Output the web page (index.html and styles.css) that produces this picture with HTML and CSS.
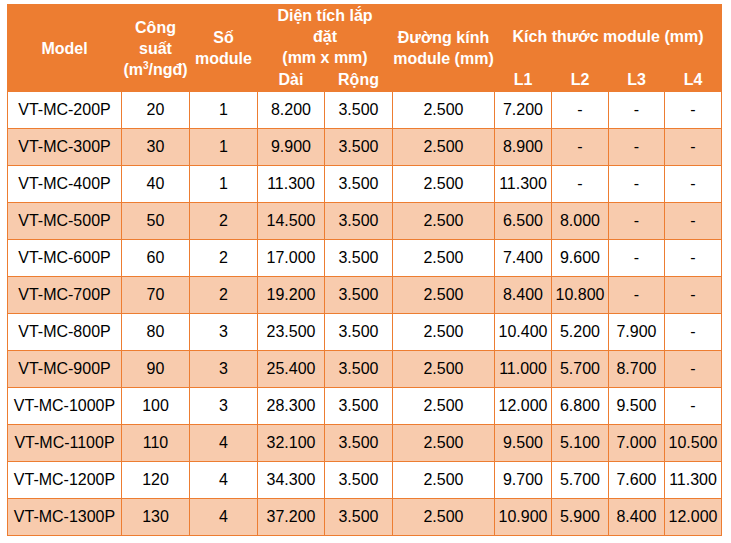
FILE: index.html
```html
<!DOCTYPE html>
<html lang="vi">
<head>
<meta charset="utf-8">
<title>Bảng thông số VT-MC</title>
<link rel="stylesheet" href="styles.css">
</head>
<body>
<div class="wrap">
<table class="spec">
<colgroup>
<col class="c-model"><col class="c-cs"><col class="c-sm"><col class="c-dai"><col class="c-rong"><col class="c-dk"><col class="c-l1"><col class="c-l2"><col class="c-l3"><col class="c-l4">
</colgroup>
<thead>
<tr class="h1">
<th rowspan="2">Model</th>
<th rowspan="2">Công<br>suất<br>(m<sup>3</sup>/ngđ)</th>
<th rowspan="2">Số<br>module</th>
<th colspan="2">Diện tích lắp<br>đặt<br>(mm x mm)</th>
<th rowspan="2">Đường kính<br>module (mm)</th>
<th colspan="4">Kích thước module (mm)</th>
</tr>
<tr class="h2">
<th>Dài</th><th>Rộng</th><th>L1</th><th>L2</th><th>L3</th><th>L4</th>
</tr>
</thead>
<tbody>
<tr><td>VT-MC-200P</td><td>20</td><td>1</td><td>8.200</td><td>3.500</td><td>2.500</td><td>7.200</td><td>-</td><td>-</td><td>-</td></tr>
<tr><td>VT-MC-300P</td><td>30</td><td>1</td><td>9.900</td><td>3.500</td><td>2.500</td><td>8.900</td><td>-</td><td>-</td><td>-</td></tr>
<tr><td>VT-MC-400P</td><td>40</td><td>1</td><td>11.300</td><td>3.500</td><td>2.500</td><td>11.300</td><td>-</td><td>-</td><td>-</td></tr>
<tr><td>VT-MC-500P</td><td>50</td><td>2</td><td>14.500</td><td>3.500</td><td>2.500</td><td>6.500</td><td>8.000</td><td>-</td><td>-</td></tr>
<tr><td>VT-MC-600P</td><td>60</td><td>2</td><td>17.000</td><td>3.500</td><td>2.500</td><td>7.400</td><td>9.600</td><td>-</td><td>-</td></tr>
<tr><td>VT-MC-700P</td><td>70</td><td>2</td><td>19.200</td><td>3.500</td><td>2.500</td><td>8.400</td><td>10.800</td><td>-</td><td>-</td></tr>
<tr><td>VT-MC-800P</td><td>80</td><td>3</td><td>23.500</td><td>3.500</td><td>2.500</td><td>10.400</td><td>5.200</td><td>7.900</td><td>-</td></tr>
<tr><td>VT-MC-900P</td><td>90</td><td>3</td><td>25.400</td><td>3.500</td><td>2.500</td><td>11.000</td><td>5.700</td><td>8.700</td><td>-</td></tr>
<tr><td>VT-MC-1000P</td><td>100</td><td>3</td><td>28.300</td><td>3.500</td><td>2.500</td><td>12.000</td><td>6.800</td><td>9.500</td><td>-</td></tr>
<tr><td>VT-MC-1100P</td><td>110</td><td>4</td><td>32.100</td><td>3.500</td><td>2.500</td><td>9.500</td><td>5.100</td><td>7.000</td><td>10.500</td></tr>
<tr><td>VT-MC-1200P</td><td>120</td><td>4</td><td>34.300</td><td>3.500</td><td>2.500</td><td>9.700</td><td>5.700</td><td>7.600</td><td>11.300</td></tr>
<tr><td>VT-MC-1300P</td><td>130</td><td>4</td><td>37.200</td><td>3.500</td><td>2.500</td><td>10.900</td><td>5.900</td><td>8.400</td><td>12.000</td></tr>
</tbody>
</table>
</div>
</body>
</html>
```
FILE: styles.css
```css
html, body {
  margin: 0;
  padding: 0;
  background: #ffffff;
}
.wrap {
  padding: 4px 0 0 7px;
}
.spec {
  border-collapse: collapse;
  table-layout: fixed;
  width: 715px;
  font-family: "Liberation Sans", Arial, sans-serif;
  font-size: 16px;
  color: #000000;
}
.c-model { width: 114px; }
.c-cs { width: 68px; }
.c-sm { width: 68px; }
.c-dai { width: 67px; }
.c-rong { width: 68px; }
.c-dk { width: 102px; }
.c-l1 { width: 57px; }
.c-l2 { width: 57px; }
.c-l3 { width: 56px; }
.c-l4 { width: 57px; }
.spec th, .spec td {
  border: 1px solid #ed7d31;
  padding: 0;
  text-align: center;
  vertical-align: middle;
  white-space: nowrap;
}
.spec th {
  background: #ed7d31;
  color: #ffffff;
  font-weight: bold;
  line-height: 21px;
}
.spec sup {
  font-size: 10px;
  line-height: 0;
  vertical-align: 6px;
}
.spec .h1 { height: 62px; }
.spec .h2 { height: 23px; }
.spec .h2 th { line-height: 20px; padding-top: 0; }
.spec tbody tr { height: 37px; }
.spec tbody tr:nth-child(even) td {
  background: #f8cbad;
}
```
